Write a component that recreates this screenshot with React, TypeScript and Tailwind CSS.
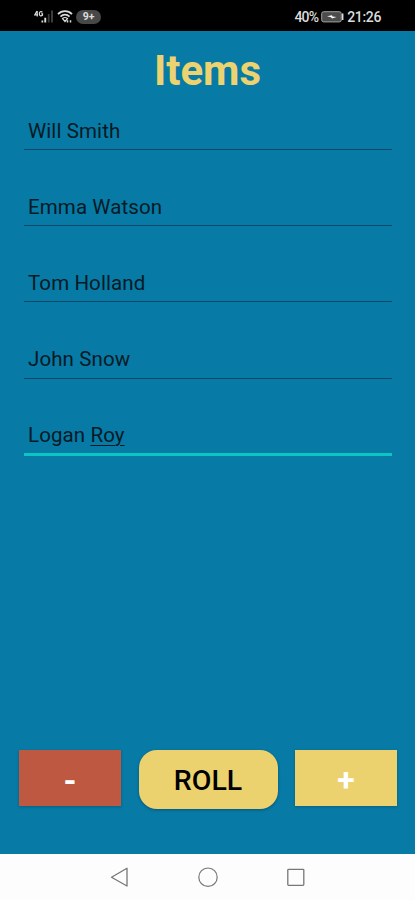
interface ItemFieldProps {
  name: string;
  active?: boolean;
}

const ITEMS = ['Will Smith', 'Emma Watson', 'Tom Holland', 'John Snow'];

function StatusBar() {
  return (
    <div className="flex h-[31px] shrink-0 items-center justify-between bg-black pl-[34px] pr-[34px] pt-[2px] text-[#dcdcdc]">
      <div className="flex items-center">
        <svg width="21" height="16" viewBox="0 0 21 16" fill="none">
          <path d="M3 2L0.8 5.8H4M3.2 2V7.5M8.5 3.2C6.8 1.8 5.3 2.8 5.3 4.7S6.8 7.6 8.5 6.3V4.8H7.2" stroke="#dcdcdc" strokeWidth="1.2" />
          <path d="M7.5 13.5V11.5H9.2V13.5ZM10.3 13.5V8.7H12.2V13.5Z" fill="#dcdcdc" />
          <path d="M13.8 13.5V5H15.6V13.5ZM17 13.5V1.5H19V13.5Z" fill="#3c3c3c" />
        </svg>
        <svg className="ml-[2px]" width="17" height="16" viewBox="0 0 17 16" fill="none">
          <path d="M1 5.2C4.8 1.2 11.2 1.2 15 5.2M3.5 7.6C6 5 10 5 12.5 7.6" stroke="#dcdcdc" strokeWidth="1.7" />
          <path d="M5.5 9.5Q8 7.5 10.5 9.5L8 12.5Z" stroke="#dcdcdc" strokeWidth="1.2" />
          <path d="M10.5 11.2V13.5M13.5 11.2V13.5" stroke="#dcdcdc" strokeWidth="1.5" />
        </svg>
        <span className="ml-[2px] flex h-[14px] w-[25px] items-center justify-center rounded-full bg-[#484848] text-[10.5px] font-bold">9+</span>
      </div>
      <div className="flex items-center text-[14px] font-medium leading-none">
        <span className="tracking-[-0.8px]">40%</span>
        <svg className="ml-[3px]" width="24" height="12" viewBox="0 0 24 12" fill="none">
          <rect x="0.7" y="0.7" width="19.6" height="10.2" rx="2" fill="#4c4c4c" stroke="#a0a0a0" />
          <path d="M6 5.2L11 4.2L11.5 5.5L15.5 6L11 7.6L10 6.3Z" fill="#fff" />
          <path d="M21.7 2.5V9" stroke="#dcdcdc" strokeWidth="1.5" />
        </svg>
        <span className="ml-[2px] tracking-[-0.35px]">21:26</span>
      </div>
    </div>
  );
}

function ItemField({ name, active }: ItemFieldProps) {
  const words = name.split(' ');
  return (
    <div className="flex h-[76.2px] flex-col">
      <div className="flex h-[36px] items-center pl-[4px] pt-[1.5px] text-[20.5px] leading-none tracking-[0.1px] text-[#051a24]">
        {active ? (
          <span>
            {words[0]} <span className="underline decoration-1 underline-offset-[3px]">{words[1]}</span>
          </span>
        ) : (
          name
        )}
      </div>
      <div className={active ? 'h-[3px] bg-[#0cc4c4]' : 'mt-px h-px bg-[#07486a]'} />
    </div>
  );
}

export default function App() {
  return (
    <div className="flex h-[900px] w-[415px] flex-col overflow-hidden bg-[#077aa6] font-['Roboto',sans-serif]">
      <StatusBar />
      <h1 className="mt-[15px] text-center text-[42px] font-bold leading-[50px] text-[#ecd36f]">Items</h1>
      <div className="mt-[16px] flex-1 pl-[24px] pr-[23px]">
        {ITEMS.map((item) => (
          <ItemField key={item} name={item} />
        ))}
        <ItemField name="Logan Roy" active />
      </div>
      <div className="flex h-[104px] shrink-0 items-start justify-between pl-[19px] pr-[18px]">
        <button className="h-[56px] w-[102px] bg-[#bf5840] pt-[6px] text-[33px] font-bold text-white shadow-[0_1px_3px_rgba(0,0,0,0.2)]">-</button>
        <button className="h-[59px] w-[139px] rounded-[18px] bg-[#ecd26f] pt-[3px] text-[28.5px] font-medium text-black shadow-[0_1px_3px_rgba(0,0,0,0.3)]">ROLL</button>
        <button className="h-[56px] w-[102px] bg-[#ecd26f] pt-[3px] text-[32px] font-bold text-white shadow-[0_1px_3px_rgba(0,0,0,0.2)]">+</button>
      </div>
      <div className="flex h-[46px] shrink-0 items-center justify-center gap-[68px] bg-[#fdfdfd]">
        <svg width="20" height="22" viewBox="0 0 20 22" fill="none" stroke="#777" strokeWidth="1.3">
          <path d="M17 2.3V20L1.5 11.2Z" strokeLinejoin="round" />
        </svg>
        <svg width="20" height="22" viewBox="0 0 20 22" fill="none" stroke="#777" strokeWidth="1.2">
          <circle cx="10" cy="11.2" r="9.2" />
        </svg>
        <svg width="20" height="22" viewBox="0 0 20 22" fill="none" stroke="#777" strokeWidth="1.3">
          <rect x="1.8" y="3.3" width="16" height="16" rx="0.8" />
        </svg>
      </div>
    </div>
  );
}
